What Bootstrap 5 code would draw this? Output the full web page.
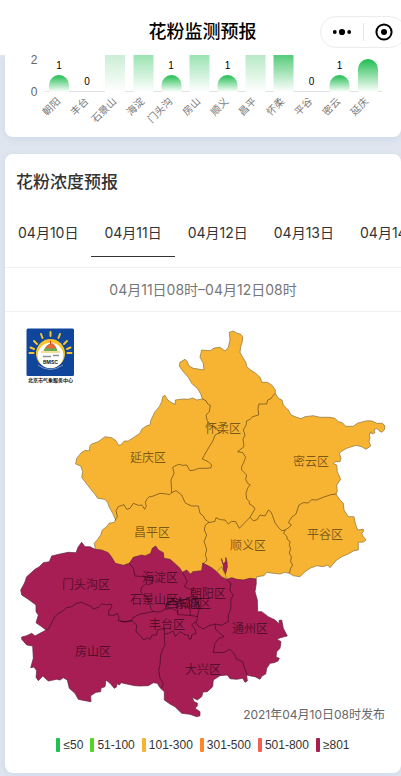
<!DOCTYPE html>
<html lang="zh-CN">
<head>
<meta charset="utf-8">
<meta name="viewport" content="width=device-width, initial-scale=1">
<title>花粉监测预报</title>
<link href="https://cdn.jsdelivr.net/npm/bootstrap@5.3.0/dist/css/bootstrap.min.css" rel="stylesheet">
<style>
  body { background: #e0e6ef; font-family: Inter, "Noto Sans CJK SC", sans-serif; font-size: 14px; color: #333; overflow-x: hidden; }
  .topbar { display: grid; grid-template-columns: 1fr auto 1fr; align-items: center; height: 55px; padding-top: 8px; overflow: hidden; z-index: 5; }
  .topbar h1 { grid-column: 2; font-size: 18px; line-height: 24px; font-weight: 500; color: #000; padding-left: 4px; }
  .capsule { justify-self: end; width: 86px; height: 32px; border: 1px solid #ededed; margin-right: -5px; }
  .capsule button { width: 42px; }
  .capsule .split { width: 1px; height: 18px; background: #e6e6e6; }
  .page { padding-left: 5px; padding-bottom: 3px; }
  .panel { border-radius: 8px; box-shadow: 0 2px 10px #cdd9ea; }
  .panel-top { border-radius: 0 0 8px 8px; margin-bottom: 17px; }
  .panel h2 { font-size: 17px; line-height: 24px; font-weight: 500; padding: 16px 11px; }
  .days { height: 58px; border-bottom: 1px solid #f3f3f3; }
  .days button { font-size: 14px; line-height: 20px; padding: 12px 13px; color: #333; height: 47px; border-bottom: 1px solid transparent; }
  .days button.active { border-color: #333; }
  .span-time { height: 44px; color: #777; border-bottom: 1px solid #efefef; }
  .issued { right: 16px; bottom: 6px; font-size: 12px; line-height: 20px; color: #666; }
  .legend { font: 12px/16px "Liberation Sans", Arial, sans-serif; gap: 7px; padding: 6px 0 20px; }
  .legend i { width: 4px; height: 14px; border-radius: 1px; margin-right: 3px; }
  .k1 { background: #22c04f; } .k2 { background: #53d422; } .k3 { background: #f7b433; }
  .k4 { background: #ff8727; } .k5 { background: #f55f50; } .k6 { background: #a61e54; }
  .num { font: 10px "Liberation Sans", Arial, sans-serif; text-anchor: middle; fill: #000; }
  .axis { font: 12px "Liberation Sans", Arial, sans-serif; text-anchor: end; fill: #666; }
  .cat text { font: 10px "Noto Sans CJK SC", sans-serif; text-anchor: end; fill: #777; }
  .area-name { font: 12px "Noto Sans CJK SC", sans-serif; text-anchor: middle; fill: #000; fill-opacity: .5; }
  .edge { fill: none; stroke: #000; stroke-opacity: .5; stroke-width: 2.5; stroke-linejoin: round; }
</style>
<script src="https://cdn.jsdelivr.net/npm/bootstrap@5.3.0/dist/js/bootstrap.bundle.min.js"></script>
</head>
<body>
<header class="topbar sticky-top bg-white">
  <h1 class="mb-0">花粉监测预报</h1>
  <div class="capsule rounded-pill d-flex align-items-center bg-white">
    <button class="btn p-0 border-0 d-flex justify-content-center" type="button" aria-label="更多">
      <svg width="20" height="8"><circle cx="2.8" cy="4" r="1.9"/><circle cx="10" cy="4" r="3.1"/><circle cx="17.2" cy="4" r="1.9"/></svg>
    </button>
    <span class="split"></span>
    <button class="btn p-0 border-0 d-flex justify-content-center" type="button" aria-label="关闭">
      <svg width="20" height="20"><circle cx="10" cy="10" r="7.6" fill="none" stroke="#000" stroke-width="2"/><circle cx="10" cy="10" r="3"/></svg>
    </button>
  </div>
</header>
<main class="page">
  <section class="panel panel-top bg-white">
    <svg class="d-block w-100" viewBox="5 55 396 82" role="img" aria-label="各区花粉等级">
      <defs>
        <linearGradient id="g1" x1="0" y1="0" x2="0" y2="1"><stop stop-color="#20bd50"/><stop offset="1" stop-color="#fff"/></linearGradient>
        <linearGradient id="g2" x1="0" y1="0" x2="0" y2="1"><stop stop-color="#cbeed6"/><stop offset="1" stop-color="#fff"/></linearGradient>
        <linearGradient id="g3" x1="0" y1="0" x2="0" y2="1"><stop stop-color="#9ae2b1"/><stop offset="1" stop-color="#fff"/></linearGradient>
        <linearGradient id="g4" x1="0" y1="0" x2="0" y2="1"><stop stop-color="#b7e9c6"/><stop offset="1" stop-color="#fff"/></linearGradient>
        <linearGradient id="g5" x1="0" y1="0" x2="0" y2="1"><stop stop-color="#55cb79"/><stop offset="1" stop-color="#fff"/></linearGradient>
      </defs>
      <path d="M45 91.500H382" stroke="#dfe1e6"/>
      <g fill="url(#g1)">
        <path d="M49 92V85a10 10 0 0 1 20 0V92z"/><path d="M161.500 92V85a10 10 0 0 1 20 0V92z"/>
        <path d="M217.500 92V85a10 10 0 0 1 20 0V92z"/><path d="M329.500 92V85a10 10 0 0 1 20 0V92z"/>
        <path d="M358 92V69a10 10 0 0 1 20 0V92z"/>
      </g>
      <rect x="105" y="55" width="20" height="37" fill="url(#g2)"/>
      <rect x="133.500" y="55" width="20" height="37" fill="url(#g3)"/>
      <rect x="189.500" y="55" width="20" height="37" fill="url(#g3)"/>
      <rect x="245.500" y="55" width="20" height="37" fill="url(#g4)"/>
      <rect x="273.500" y="55" width="20" height="37" fill="url(#g5)"/>
      <g class="axis"><text x="37.500" y="64">2</text><text x="37.500" y="96">0</text></g>
      <g class="num"><text x="59" y="69">1</text><text x="87" y="85">0</text><text x="171" y="69">1</text><text x="227.500" y="69">1</text><text x="311.500" y="85">0</text><text x="339.500" y="69">1</text></g>
      <g class="cat">
        <text transform="translate(61 102) rotate(-45)">朝阳</text><text transform="translate(89 102) rotate(-45)">丰台</text>
        <text transform="translate(117 102) rotate(-45)">石景山</text><text transform="translate(145 102) rotate(-45)">海淀</text>
        <text transform="translate(173 102) rotate(-45)">门头沟</text><text transform="translate(201 102) rotate(-45)">房山</text>
        <text transform="translate(229 102) rotate(-45)">顺义</text><text transform="translate(257 102) rotate(-45)">昌平</text>
        <text transform="translate(285 102) rotate(-45)">怀柔</text><text transform="translate(313 102) rotate(-45)">平谷</text>
        <text transform="translate(341 102) rotate(-45)">密云</text><text transform="translate(369 102) rotate(-45)">延庆</text>
      </g>
    </svg>
  </section>

  <section class="panel bg-white">
    <h2 class="m-0">花粉浓度预报</h2>
    <nav class="days d-flex overflow-hidden text-nowrap" aria-label="日期">
      <button class="btn rounded-0 border-top-0 border-start-0 border-end-0 flex-shrink-0" type="button">04月10日</button>
      <button class="btn rounded-0 border-top-0 border-start-0 border-end-0 flex-shrink-0 active" type="button">04月11日</button>
      <button class="btn rounded-0 border-top-0 border-start-0 border-end-0 flex-shrink-0" type="button">04月12日</button>
      <button class="btn rounded-0 border-top-0 border-start-0 border-end-0 flex-shrink-0" type="button">04月13日</button>
      <button class="btn rounded-0 border-top-0 border-start-0 border-end-0 flex-shrink-0" type="button">04月14日</button>
    </nav>
    <div class="span-time d-flex align-items-center justify-content-center">04月11日08时–04月12日08时</div>
    <div class="position-relative">
      <svg class="d-block w-100" viewBox="5 312 396 419" role="img" aria-label="北京市花粉浓度预报图">
        <!-- service logo -->
        <rect x="26.500" y="328.500" width="47.500" height="47.500" rx="1.500" fill="#0f469b"/>
        <g stroke="#f6c52e" stroke-width="2" stroke-linecap="round"><path d="M50.500 332v4M41 334l1.500 4M60 334l-1.500 4M34 341l3 3M67 341l-3 3M30.500 347.500l3.500 1.500M70.500 347.500l-3.500 1.500M29.500 353h4M67.500 353h4"/></g>
        <circle cx="50.500" cy="353.500" r="14.500" fill="#f6c52e"/>
        <circle cx="50.500" cy="355.500" r="12.800" fill="#fff"/>
        <path d="M43.500 351q2-6 7-7t7 7z" fill="#5fae59"/><path d="M45 348.500q2-4 5.500-5t5.500 5z" fill="#e36b38"/><path d="M50.500 340.500v4" stroke="#d63c2e"/>
        <path d="M41 352h19" stroke="#f0b732"/><path d="M43 356.500h8m2-1h6" stroke="#8a8f99" stroke-width="1.500"/>
        <text x="50.500" y="364" font-size="5" font-weight="700" text-anchor="middle" fill="#20252c">BMSC</text>
        <path d="M38 365q12 9 25 0" fill="none" stroke="#7f95bd" stroke-width="1"/>
        <text x="50.500" y="381.500" font-size="5" font-weight="700" text-anchor="middle" fill="#111">北京市气象服务中心</text>

        <!-- northern districts -->
        <path fill="#f7b433" stroke="#8b713c" stroke-width=".7" stroke-linejoin="round" d="M229.300 332.300L233.300 331 236.700 333 240.700 334.300 242.700 336.700 242.300 341.700 240.700 346.700 240 352.300 242.700 357.300 246 362.700 246.700 366.700 250.700 370 255.700 373.300 260 377.300 262 382.300 267.300 382.300 271.700 385 275.300 390 275.300 393.300 278.300 398.300 282 400 283.300 405 288.300 410 291 415 296.700 417.300 301 418.700 305 416.700 313.300 415.700 320 417.300 330 417.300 335 418.300 338.300 421.700 342.300 422.700 345.700 426.300 353.300 426.300 357.300 423.300 361.700 422 367.300 420.700 372.300 421 376.700 423.300 382.300 423.300 385 426 384.300 430 381.700 432.300 379 430.700 376.700 428.300 374 430 375 432.700 372 434 371 431.700 369.300 435 370 438 369 441.700 370.700 446 366 449.300 361.700 446.700 356 445.300 351.700 446.700 346.700 448.300 341.700 451.300 339.300 453.300 341 458.300 340 461.700 335 461.700 333.300 463.500 336.700 465 337.300 471.700 340.700 479.300 336.700 485 337.300 491.700 336 494 340 500 343.300 503.300 344 510 348.300 516.700 354 516.700 355.300 523.300 357.700 530 363.300 529.300 363.500 531.500 361.700 533.300 363.300 536.700 366 540 363.300 542 358.300 542.300 358.300 550 354 550.700 348.300 554 341.700 556.700 336.700 560 332.300 565 330 567.700 327.700 565 323.300 566.700 316.700 565.700 310 568.300 305 571.700 300 576.700 293.300 575.700 289.300 573.300 285 572.300 280 574 273.300 573.300 266.700 572.300 264 575.700 256.700 576.700 255 585 190 590 120 575 95 550 95 546.700 94.300 543.300 97.700 539.300 100.700 535 102.300 530 106.700 526.700 109 523.300 114.300 522.300 115.700 520 112.700 513.300 109.300 507.300 107.700 502.700 105 499.300 97.700 498.300 95 494.300 90 488.300 85 481.700 81.700 477.300 82.700 471.700 80.700 466 75.700 464 76.700 458.300 81.700 452.300 85 450.500 89.300 450.700 90 445.700 91.700 444 98.300 441.700 105 436.700 111.700 437.700 116 440.700 118.300 445 120.700 445 124.300 441 128.300 441 133.300 437.700 140 433.300 141.700 429.300 146.700 425.700 150 425 151 420 155 411.700 159.300 406.700 161.700 401.700 162.700 396.700 165 395.300 167.700 400 171.700 402.700 175.300 404.300 175.300 400 183.300 399 188.300 399.300 192.700 398 196.700 400 202.300 399 200.700 394 197.300 388.300 193.300 385 191.700 383.300 188.300 377.300 182.700 371 179.300 366 180 362.300 185 359.300 187.300 361.700 189 366 193.300 368.300 204 370 203.300 363.300 200 357.300 201.700 350 210 350.700 214.300 348 220 347.300 225 351 228.300 347.300 230 340z"/>
        <!-- southern districts -->
        <path fill="#a61e54" stroke="#672544" stroke-width=".7" stroke-linejoin="round" d="M81.700 542.300L85 546.700 90 546.700 95 549.300 101.700 550 108.300 552.700 111.700 557.300 115.300 563.300 123.300 565.300 129.300 563.300 133.300 557.300 138.300 556 141.700 555 145 556 150.700 553.300 152.300 548.300 155.700 546 158.300 550 163.300 552.700 164 558.300 170 559.300 174 562.700 180 568.300 182.300 572.300 186.700 570 190.700 574.300 192.700 571.700 201.700 570.700 202.700 563.300 206.700 565 211.700 567.700 216.700 571.700 221.700 576.700 226.700 579.300 231.700 577.700 236.700 579.300 243.300 580 250 578.300 256 579 256.300 583.300 255 591.700 257.300 600 257.700 611.700 261.700 611.700 268.300 616.700 275 620 279.300 624 279 620.500 281.700 620 283.300 628.300 287.300 636 283 637 276.700 639 281 641.700 280 648.300 276.700 651.700 276 657 279.300 658.300 278 661 274 662.700 270 663.300 266.700 668.300 265.700 674 262 676 260 679.300 255 676.700 251 676 246.700 675 247.300 681 245 682.300 242.700 678.300 236.700 679.300 230 678.700 227.300 675 220 675.700 213.300 680 212.700 686.700 207.300 691.700 203 692 201.700 696.700 197.300 700 192.300 697.300 194 701.700 197.300 703 197.300 706 195 708.300 200 711.700 200 715.700 196.700 716.700 190 714.300 181.700 713.300 175 706.700 170 704 164.300 700 164.300 691.700 160 687.700 157.300 683.300 153.300 682.700 148.300 685.700 140 686 135 685.700 126.700 684 121 682.700 119.300 685 117 683.500 116.500 687 114.300 688.300 110 683.300 106 680 105 686.700 101 688 100.700 691.700 96 692.300 90.700 695.700 91 701.700 85 700.700 78.300 699.300 75 693.300 69.300 688.300 67.300 680 63.300 677.700 60 680 56.700 679.300 48.300 681 42.700 676 38.300 680.700 36 677.300 36.700 670.700 34 667 30.700 667.700 33.300 658.300 32.700 646 26.700 645 21.700 639.300 21.700 637 26.700 635.700 31.700 633.300 35 636 40 633.300 46 630 41.700 626.700 36 622.700 38.300 615 36 611.700 36 605 28.300 599.300 21.700 595 20.700 590 24 584 25 581.700 26.700 576.700 35 569.300 39 567 43.300 562.700 49.300 561.700 51.700 556 60 554 68.300 552.300 76 552.700 78.300 546.700z"/>
        <!-- airport enclave -->
        <path fill="#a61e54" stroke="#672544" stroke-width=".7" d="M221.300 558.500L223 564 225.800 561.500 225.800 557.500 227 562 227.300 567 225.300 574.500 223.500 571 223.300 565z"/>
        <path fill="#f7b433" stroke="#8b713c" stroke-width=".7" d="M221.500 566.500L217 571.500 221.700 576.500 226.700 579 225.300 574.500 223.500 571z"/>

        <g class="edge">
          <g transform="translate(70 380) scale(.3333)">
            <path d="M397 57L408 62 413 72 421 76 418 95 408 105 411 120 420 135 438 142 450 158 435 165 430 180 412 210 405 222 397 237 415 245 425 255 422 264 405 265 385 265 374 270 360 272 350 255 338 256 325 253 308 262 312 280 303 300 305 338"/>
            <path d="M305 338L298 344 290 342 270 340 245 350 238 350 230 358 226 368 229 378 224 388 216 375 205 376 190 370 180 385 170 388 162 374 145 380 138 392 142 410 135 422"/>
            <path d="M305 338L318 332 335 345 340 356 345 368 352 372 365 378 385 378 388 390 390 400 400 408 405 418 417 427"/>
            <path d="M417 427L406 435 403 450 410 465 402 485 406 495 410 510 406 525 411 540 404 548 398 550"/>
          </g>
          <g transform="translate(200 430) scale(.3333)">
            <path d="M27 278L45 274 48 263 60 269 75 270 85 282 95 274 107 275 118 295 150 262"/>
            <path d="M125 120L140 135 137 148 143 160 151 165 144 172 138 190 140 206 148 215 148 222 160 229 165 237 150 262"/>
            <path d="M150 262L160 272 170 270 180 255 195 258 205 240 213 246 218 258 225 278 235 292 245 302 255 300"/>
            <path d="M255 300L268 292 274 284 265 278 275 262 288 252 297 225 310 218 325 219 335 209 350 210 375 200 393 194 408 192"/>
            <path d="M255 300L251 310 260 318 262 328 270 335 268 347 272 355 268 370 274 380 272 396 278 405 272 415 268 430"/>
          </g>
          <path transform="translate(170 320) scale(.3333)" d="M316 220L308 228 303 236 293 240 290 252 267 252 264 265 266 285 248 290 240 298 230 303 228 316 220 330 225 345 219 358 222 380 203 395 218 398 227 412 222 425 215 440 215 450"/>
          <path transform="translate(10 530) scale(.3333)" d="M108 300L116 296 124 280 135 260 145 250 160 242 170 233 185 230 200 220 215 217 230 224 245 230 250 237 265 232 275 222 290 224 303 222 306 232 297 240 295 255 312 256 322 250 327 262 325 272 345 275 365 272"/>
          <g transform="translate(120 540) scale(.3333)">
            <path d="M28 70L40 85 45 108 75 110 80 130 65 142 62 155 70 165 80 170 90 190 92 206 100 215 60 222 40 232 35 242 15 246 0 243"/>
            <path d="M35 242L50 255 48 275 62 287 70 300 85 293 90 298 97 285 110 285 112 270 133 265"/>
            <path d="M133 265L133 290 135 315 128 328 122 345 120 375 116 390 120 415 130 430 125 445"/>
            <path d="M135 282L145 280 160 273 166 290 172 283 180 275 195 284 205 286 208 298 214 296 215 285 228 280 224 266 215 255 227 245 234 258 250 267 265 258 285 252 305 256 325 245 325 225 330 215 333 200 332 180 340 165 329 150 333 130 320 118"/>
            <path d="M285 252L287 268 300 280 312 290 297 295 285 310 280 337 310 338 330 328 345 345 350 358 368 365 374 385 382 405"/>
            <path d="M187 97L195 110 202 125 193 140 205 146 217 150 214 163 225 180 235 185 238 205 234 222 230 245"/>
            <path d="M100 215L120 216 135 208 140 190 160 182 178 185 195 180 203 175 215 170M140 190L138 208 158 205 173 215 173 224 208 226 234 230M173 185L173 220M208 180L211 226M75 110L100 112 98 130 80 135"/>
          </g>
        </g>
        <g class="area-name">
          <text x="223" y="433">怀柔区</text><text x="311" y="466">密云区</text><text x="148" y="462">延庆区</text>
          <text x="152" y="537">昌平区</text><text x="325" y="539">平谷区</text><text x="248" y="550">顺义区</text>
          <text x="86" y="589">门头沟区</text><text x="93" y="656">房山区</text><text x="160" y="582">海淀区</text>
          <text x="154" y="604">石景山区</text><text x="208" y="598">朝阳区</text><text x="184" y="608">西城区</text>
          <text x="193" y="608">东城区</text><text x="167" y="629">丰台区</text><text x="250" y="633">通州区</text><text x="203" y="674">大兴区</text>
        </g>
      </svg>
      <div class="issued position-absolute">2021年04月10日08时发布</div>
    </div>
    <div class="legend d-flex justify-content-center">
      <span class="d-flex align-items-center"><i class="k1"></i>≤50</span>
      <span class="d-flex align-items-center"><i class="k2"></i>51-100</span>
      <span class="d-flex align-items-center"><i class="k3"></i>101-300</span>
      <span class="d-flex align-items-center"><i class="k4"></i>301-500</span>
      <span class="d-flex align-items-center"><i class="k5"></i>501-800</span>
      <span class="d-flex align-items-center"><i class="k6"></i>≥801</span>
    </div>
  </section>
</main>
</body>
</html>
